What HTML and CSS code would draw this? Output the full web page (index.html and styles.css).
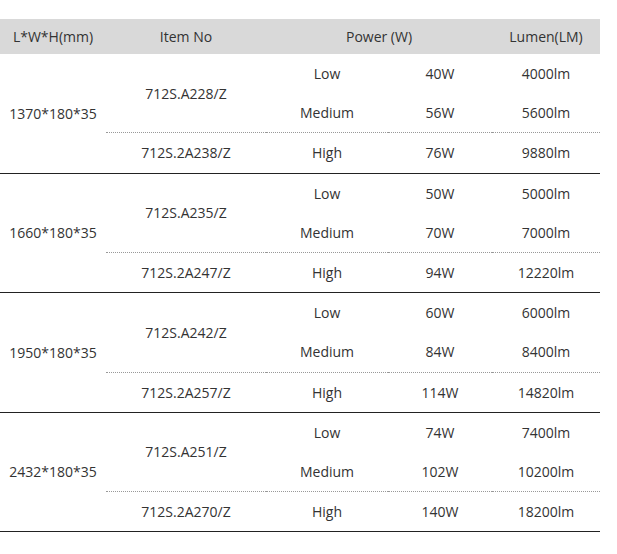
FILE: index.html
```html
<!DOCTYPE html>
<html>
<head>
<meta charset="utf-8">
<link rel="stylesheet" href="styles.css">
</head>
<body>
<div class="wrap">
<table class="spec">
  <colgroup>
    <col class="c1"><col class="c2"><col class="c3"><col class="c4"><col class="c5">
  </colgroup>
  <thead>
    <tr class="head">
      <th>L*W*H(mm)</th>
      <th>Item No</th>
      <th colspan="2">Power (W)</th>
      <th>Lumen(LM)</th>
    </tr>
  </thead>
  <tbody class="group">
    <tr><td rowspan="3" class="size">1370*180*35</td><td rowspan="2" class="dot">712S.A228/Z</td><td>Low</td><td>40W</td><td>4000lm</td></tr>
    <tr class="dot"><td>Medium</td><td>56W</td><td>5600lm</td></tr>
    <tr><td>712S.2A238/Z</td><td>High</td><td>76W</td><td>9880lm</td></tr>
  </tbody>
  <tbody class="group">
    <tr><td rowspan="3" class="size">1660*180*35</td><td rowspan="2" class="dot">712S.A235/Z</td><td>Low</td><td>50W</td><td>5000lm</td></tr>
    <tr class="dot"><td>Medium</td><td>70W</td><td>7000lm</td></tr>
    <tr><td>712S.2A247/Z</td><td>High</td><td>94W</td><td>12220lm</td></tr>
  </tbody>
  <tbody class="group">
    <tr><td rowspan="3" class="size">1950*180*35</td><td rowspan="2" class="dot">712S.A242/Z</td><td>Low</td><td>60W</td><td>6000lm</td></tr>
    <tr class="dot"><td>Medium</td><td>84W</td><td>8400lm</td></tr>
    <tr><td>712S.2A257/Z</td><td>High</td><td>114W</td><td>14820lm</td></tr>
  </tbody>
  <tbody class="group">
    <tr><td rowspan="3" class="size">2432*180*35</td><td rowspan="2" class="dot">712S.A251/Z</td><td>Low</td><td>74W</td><td>7400lm</td></tr>
    <tr class="dot"><td>Medium</td><td>102W</td><td>10200lm</td></tr>
    <tr><td>712S.2A270/Z</td><td>High</td><td>140W</td><td>18200lm</td></tr>
  </tbody>
</table>
</div>
</body>
</html>
```
FILE: styles.css
```css
html, body {
  margin: 0;
  padding: 0;
  background: #fff;
}
.wrap {
  padding-top: 19px;
}
.spec {
  width: 600px;
  border-collapse: collapse;
  table-layout: fixed;
  font-family: "Open Sans", "Liberation Sans", sans-serif;
  font-size: 14px;
  color: #333;
}
.c1 { width: 106px; }
.c2 { width: 160px; }
.c3 { width: 122px; }
.c4 { width: 104px; }
.c5 { width: 108px; }
.spec th {
  background: #d9d9d9;
  font-weight: normal;
  height: 35px;
  padding: 0;
  text-align: center;
  vertical-align: middle;
}
.spec td {
  height: 39.2px;
  padding: 0;
  text-align: center;
  vertical-align: middle;
}
.group {
  border-bottom: 1px solid #222;
}
.spec tr.dot td,
.spec td.dot {
  border-bottom: 1px dotted #999;
}
```
